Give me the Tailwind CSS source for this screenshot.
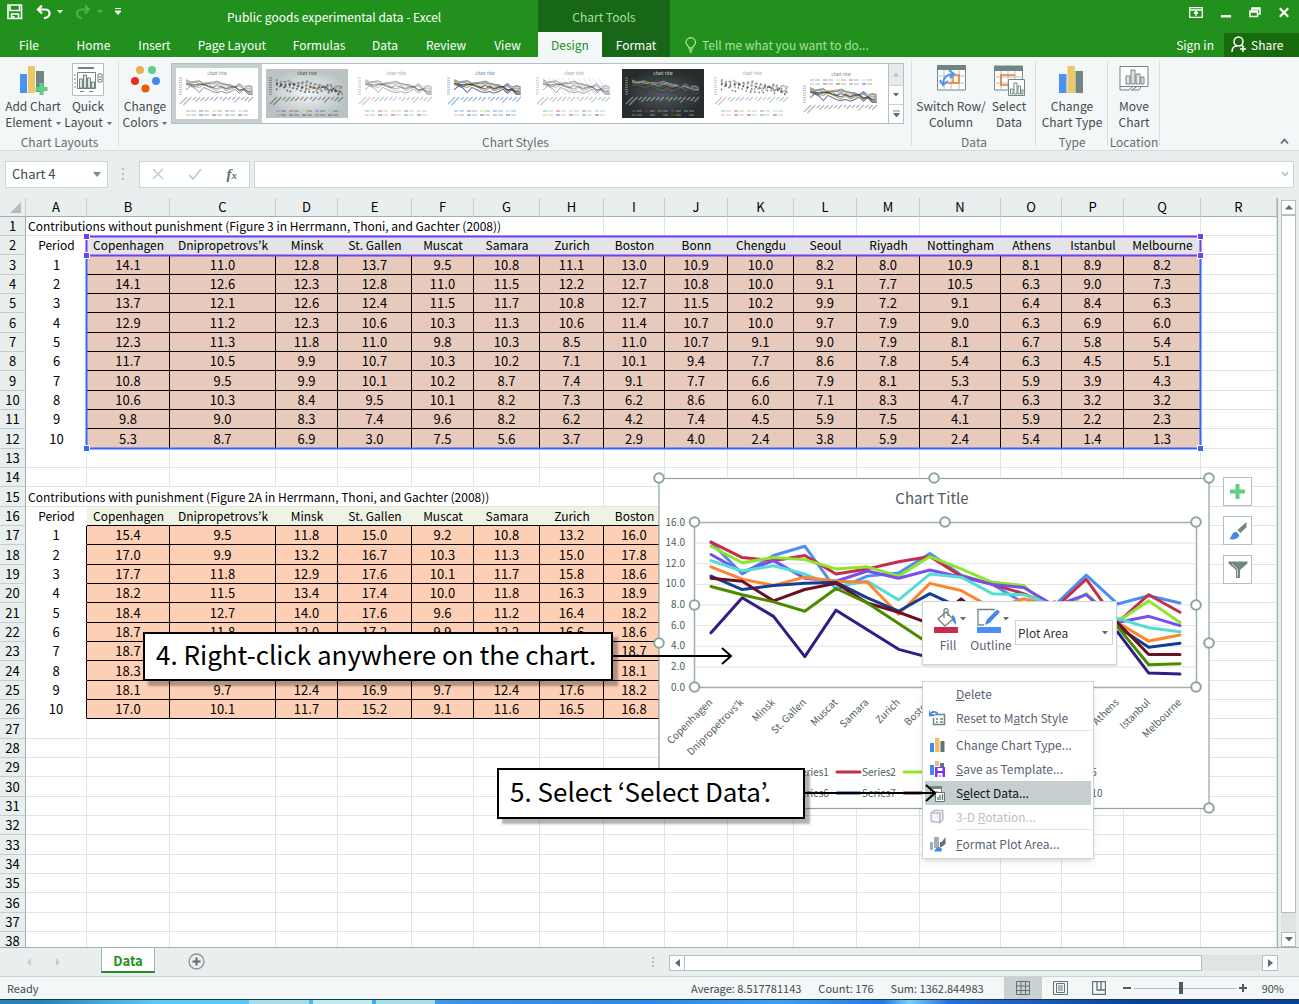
<!DOCTYPE html>
<html lang="en">
<head>
<meta charset="utf-8">
<title>Public goods experimental data - Excel</title>
<script src="https://cdn.jsdelivr.net/npm/@tailwindcss/browser@4"></script>
</head>
<body class="flex h-screen flex-col overflow-hidden bg-[#e9eeee] font-['Noto_Sans_CJK_KR','Open_Sans',sans-serif] text-[12px] leading-4 text-[#3f4b4b]">

<header class="flex h-[57px] shrink-0 bg-[#21901c] text-white">
  <div class="flex w-[538px] shrink-0 flex-col">
    <div class="flex h-8 items-center">
      <div class="flex w-[136px] items-center gap-3 pb-2 pl-[7px]">
        <button aria-label="Save"><svg width="16" height="16" viewBox="0 0 16 16" fill="none" stroke="#fff" stroke-width="1.6"><path d="M1 1h13.5v13.5H1z"/><path d="M3 1v5.5h9.5V1M4.500 14.500V10h7v4.500"/><path d="M6.500 12v2" stroke-width="2"/></svg></button>
        <button aria-label="Undo" class="flex items-center gap-1"><svg width="18" height="16" viewBox="0 0 18 16" fill="none" stroke="#fff" stroke-width="2.200"><path d="M7 1.500 3 5.500l4 4M3 5.500h7c3 0 4.500 1.500 4.500 4S12 14 9 14"/></svg><svg width="6" height="4"><path d="M0 0h6L3 3.500z" fill="#fff"/></svg></button>
        <button aria-label="Redo" class="flex items-center gap-1"><svg width="18" height="16" viewBox="0 0 18 16" fill="none" stroke="#4db04a" stroke-width="2.200"><path d="m10 1.500 4 4-4 4M14 5.500H7C4 5.500 2 7 2 9.500S4 14 7 14"/></svg><svg width="6" height="4"><path d="M0 0h6L3 3.500z" fill="#4db04a"/></svg></button>
        <button aria-label="Customize quick access"><svg width="6" height="8"><path d="M0 .5h6M0 3h6L3 6.500z" fill="#fff" stroke="#fff"/></svg></button>
      </div>
      <h1 class="flex-1 pl-[91px] pt-[2px]">Public goods experimental data - Excel</h1>
    </div>
    <nav class="flex h-[25px] items-center text-center">
      <a href="#" class="w-[58px]">File</a><a href="#" class="ml-1 w-[63px]">Home</a><a href="#" class="w-[59px]">Insert</a><a href="#" class="w-[96px]">Page Layout</a><a href="#" class="w-[78px]">Formulas</a><a href="#" class="w-[54px]">Data</a><a href="#" class="w-[68px]">Review</a><a href="#" class="w-[55px]">View</a>
    </nav>
  </div>
  <div class="flex w-[132px] shrink-0 flex-col bg-[#186617] text-center">
    <div class="h-8 pt-[9px] text-[#a9e0a0]">Chart Tools</div>
    <nav class="flex h-[25px] leading-[25px]"><a href="#" class="w-16 bg-[#f4f7f8] text-[#21901c]">Design</a><a href="#" class="flex-1">Format</a></nav>
  </div>
  <div class="flex flex-1 flex-col">
    <div class="flex h-8 items-center justify-end gap-[18px] pb-2 pr-[10px]">
      <button aria-label="Ribbon display options"><svg width="14" height="11" fill="none" stroke="#fff" stroke-width="1.300"><path d="M.7.7h12.600v9.600H.7zM.7 3h12.600M7 9V5M5 6.500 7 4.500l2 2"/></svg></button>
      <button aria-label="Minimize"><svg width="10" height="11"><path d="M0 8h10v2.500H0z" fill="#fff"/></svg></button>
      <button aria-label="Restore"><svg width="12" height="11" fill="none" stroke="#fff" stroke-width="1.500"><path d="M3 4V1h8v6H9M1 4h7.500v5.500H1zM1 5h7.500M3 2h8"/></svg></button>
      <button aria-label="Close"><svg width="10" height="11"><path d="m.8 1.300 8.400 8.400m0-8.400L.8 9.700" stroke="#fff" stroke-width="2.200"/></svg></button>
    </div>
    <div class="flex h-[25px] items-center">
      <svg width="12" height="16" class="ml-[15px] mr-[5px]" fill="none" stroke="#a9e0a0" stroke-width="1.300"><path d="M4 11c0-2-3-3-3-5.500a4.500 4.500 0 0 1 9.500 0C10.500 8 7.500 9 7.500 11zM4 13h3.500M4.500 15h2.500"/></svg>
      <span class="flex-1 text-[#a9e0a0]">Tell me what you want to do...</span>
      <a href="#" class="mr-[10px]">Sign in</a>
      <button class="flex h-[24px] w-[75px] items-center gap-1 bg-[#186a0c] pl-[7px]"><svg width="16" height="17" fill="none" stroke="#fff" stroke-width="1.500"><circle cx="7.500" cy="5.500" r="4.500"/><path d="M1 16c0-4 2-6 5-6M10 9l3 2M12 10v6M9 13h6"/></svg>Share</button>
    </div>
  </div>
</header>

<section class="flex h-[94px] shrink-0 border-b border-[#d5dcdc] bg-[#f4f7f8] text-center" aria-label="Ribbon">
  <div class="relative w-[119px] shrink-0 pt-[6px]">
    <div class="flex pl-1">
      <button class="flex w-[58px] flex-col items-center"><svg width="32" height="35" viewBox="0 0 32 35"><path d="M3 11h7v19H3z" fill="#4a93f0"/><path d="M11 3h7v27h-7z" fill="#edc866"/><path d="M19 8h8v21h-8z" fill="#718583"/><path d="M24.500 20v12M18.500 26h12" stroke="#5fcf83" stroke-width="4"/></svg><span class="whitespace-nowrap">Add Chart<br>Element<svg class="ml-1 inline" width="5" height="4"><path d="M0 0h5L2.500 3z" fill="#667"/></svg></span></button>
      <button class="flex w-[52px] flex-col items-center"><svg width="32" height="35" viewBox="0 0 32 35" fill="none" stroke="#718583"><path d="M.5.5h31v32H.5z" fill="#fff" stroke="#b4c0bf"/><path d="M6 5h16" stroke-width="2"/><path d="M5.500 9.500h18v16h-18zM2 12h2M2 16h2M2 20h2M2 24h2M8 28.500h4M17 28.500h4"/><path d="M7.500 16h3v9h-3zM11.500 12h3v13h-3zM15.500 15h3v10h-3zM19.500 19h3v6h-3z" fill="#dfe5e5"/><path d="M26 11h4v8h-4zM27 14h2M27 16.500h2"/></svg><span class="whitespace-nowrap">Quick<br>Layout<svg class="ml-1 inline" width="5" height="4"><path d="M0 0h5L2.500 3z" fill="#667"/></svg></span></button>
    </div>
    <div class="pt-1 text-[#5f6f6e]">Chart Layouts</div>
    <div class="absolute right-0 top-1 h-[85px] w-px bg-[#d9dfdf]"></div>
  </div>
  <div class="relative w-[793px] shrink-0 pt-[6px]">
    <div class="flex">
      <button class="flex w-[52px] flex-col items-center"><svg width="32" height="35" viewBox="0 0 32 35"><circle cx="11" cy="7" r="4" fill="#e9b04d"/><circle cx="23" cy="7" r="4" fill="#5fcf83"/><circle cx="6" cy="18" r="4" fill="#e2321b"/><circle cx="27" cy="18" r="4" fill="#4289ea"/><circle cx="16.500" cy="25.500" r="4" fill="#ee5b08"/></svg><span class="whitespace-nowrap">Change<br>Colors<svg class="ml-1 inline" width="5" height="4"><path d="M0 0h5L2.500 3z" fill="#667"/></svg></span></button>
      <div class="flex h-[61px] border border-[#b4c0bf] bg-white">
        <div id="gallery" class="flex w-[716px]"></div>
        <div class="flex w-[15px] flex-col border-l border-[#b4c0bf]">
          <button aria-label="Previous styles" class="flex h-[21px] items-center justify-center bg-[#e6eaea]"><svg width="6" height="4"><path d="M0 3.500h6L3 0z" fill="#b4c0bf"/></svg></button>
          <button aria-label="Next styles" class="flex flex-1 items-center justify-center border-y border-[#c9d2d1]"><svg width="6" height="4"><path d="M0 0h6L3 3.500z" fill="#667"/></svg></button>
          <button aria-label="More styles" class="flex flex-1 items-center justify-center"><svg width="7" height="8"><path d="M0 1h7M.5 3.500h6L3.500 7z" fill="#667" stroke="#667" stroke-width=".8"/></svg></button>
        </div>
      </div>
    </div>
    <div class="pt-1 text-[#5f6f6e]">Chart Styles</div>
    <div class="absolute right-0 top-1 h-[85px] w-px bg-[#d9dfdf]"></div>
  </div>
  <div class="relative w-[124px] shrink-0 pt-[6px]">
    <div class="flex">
      <button class="flex w-[78px] flex-col items-center"><svg width="32" height="35" viewBox="0 0 32 35" fill="none"><path d="M2.500 3h28v24h-28z" fill="#fff" stroke="#718583"/><path d="M2 2h29v5H2z" fill="#718583"/><path d="M2 13h29M2 20h29M9 7v20M16 7v20M24 7v20" stroke="#b4c0bf"/><path d="M18 12h6v8H13M18 20v-8" stroke="#ee7a2b" stroke-width="1.500"/><path d="M8 21c0-6 3-9.500 10-10M5 17l3 5 5-4M14 7l5 4-4 4" stroke="#4a93f0" stroke-width="2"/></svg><span class="whitespace-nowrap">Switch Row/<br>Column</span></button>
      <button class="flex w-[38px] flex-col items-center"><svg width="32" height="35" viewBox="0 0 32 35" fill="none"><path d="M1.500 3h28v24h-28z" fill="#fff" stroke="#718583"/><path d="M1 3h29v5H1z" fill="#718583"/><path d="M1 14h29M1 20h29M8 8v19M15 8v19M22 8v19" stroke="#b4c0bf"/><path d="M22 12H8v10h7" stroke="#ee7a2b" stroke-width="1.500"/><path d="M15.500 16.500h16v16h-16z" fill="#fff" stroke="#718583"/><path d="M17.500 26v5h2.500v-5zM21 20v11h3V20zM25 23v8h2.500v-8zM28 27h2v4h-2z" stroke="#718583"/></svg><span>Select<br>Data</span></button>
    </div>
    <div class="pt-1 text-[#5f6f6e]">Data</div>
    <div class="absolute right-0 top-1 h-[85px] w-px bg-[#d9dfdf]"></div>
  </div>
  <div class="relative w-[72px] shrink-0 pt-[6px]">
    <button class="flex w-full flex-col items-center"><svg width="32" height="35" viewBox="0 0 32 35"><path d="M3 11h7.500v19H3z" fill="#4a93f0"/><path d="M11.500 3h7.500v27h-7.500z" fill="#edc866"/><path d="M19.500 8H27v22h-7.500z" fill="#718583"/></svg><span class="whitespace-nowrap">Change<br>Chart Type</span></button>
    <div class="pt-1 text-[#5f6f6e]">Type</div>
    <div class="absolute right-0 top-1 h-[85px] w-px bg-[#d9dfdf]"></div>
  </div>
  <div class="relative w-[52px] shrink-0 pt-[6px]">
    <button class="flex w-full flex-col items-center"><svg width="32" height="35" viewBox="0 0 32 35" fill="none" stroke="#718583"><path d="M2 3.500h28v20H2z" fill="#fff"/><path d="M8 13h4v8H8zM13 7h4v14h-4zM18 11h4v10h-4zM23 14h3v7h-3z" fill="#dfe5e5"/><path d="M2 23v4h9l4-3.500M14 27l5-3.500M13 27h8l2-3.500"/></svg><span>Move<br>Chart</span></button>
    <div class="pt-1 text-[#5f6f6e]">Location</div>
    <div class="absolute right-0 top-1 h-[85px] w-px bg-[#d9dfdf]"></div>
  </div>
  <div class="flex flex-1 items-end justify-end pb-[5px] pr-[10px]"><button aria-label="Collapse ribbon"><svg width="9" height="7" fill="none" stroke="#667" stroke-width="1.800"><path d="m1 5.500 3.500-4 3.500 4"/></svg></button></div>
</section>

<section class="flex h-[47px] shrink-0 items-center px-[5px] pb-[1px] text-[13px]" aria-label="Formula bar">
  <div class="flex h-[27px] w-[103px] items-center border border-[#ccd5d5] bg-white"><input aria-label="Name box" value="Chart 4" class="w-20 flex-1 pl-[6px] outline-none"><button aria-label="Name list" class="pr-[6px]"><svg width="8" height="5"><path d="M0 0h8L4 5z" fill="#7b8b8a"/></svg></button></div>
  <svg width="31" height="12" fill="#b4c0bf"><path d="M14 0h2v2h-2zM14 5h2v2h-2zM14 10h2v2h-2z"/></svg>
  <div class="flex h-[27px] w-[111px] items-center justify-around border border-[#ccd5d5] bg-white">
    <button aria-label="Cancel"><svg width="12" height="12" stroke="#c4cece" stroke-width="1.600"><path d="m1 1 10 10M11 1 1 11"/></svg></button>
    <button aria-label="Enter"><svg width="14" height="12" fill="none" stroke="#c4cece" stroke-width="2"><path d="m1 7 4 4 8-10"/></svg></button>
    <button aria-label="Insert function" class="font-['Liberation_Serif',serif] text-[15px] font-bold italic text-[#5f6f6e]">f<span class="text-[11px]">x</span></button>
  </div>
  <div class="ml-1 flex h-[27px] flex-1 items-center border border-[#ccd5d5] bg-white pr-1"><input aria-label="Formula" class="h-full flex-1 outline-none"><button aria-label="Expand formula bar"><svg width="8" height="6" fill="none" stroke="#b4c0bf" stroke-width="1.600"><path d="m1 1 3 3.500L7 1"/></svg></button></div>
</section>

<main class="relative flex min-h-0 flex-1 overflow-hidden border-b border-[#9fb1ae]">
  <div class="min-w-0 flex-1 overflow-hidden border-r border-[#9fb1ae] bg-white">
    <table class="w-full table-fixed border-separate border-spacing-0 text-center text-[13px] text-black">
      <colgroup><col class="w-[26px]"><col class="w-[61px]"><col class="w-[83px]"><col class="w-[106px]"><col class="w-[62px]"><col class="w-[74px]"><col class="w-[62px]"><col class="w-[66px]"><col class="w-[64px]"><col class="w-[61px]"><col class="w-[63px]"><col class="w-[66px]"><col class="w-[63px]"><col class="w-[63px]"><col class="w-[81px]"><col class="w-[61px]"><col class="w-[62px]"><col class="w-[77px]"><col></colgroup>
      <thead id="head"></thead>
      <tbody id="body"></tbody>
    </table>
  </div>
  <div class="flex w-[21px] shrink-0 flex-col items-center pt-[2px]">
    <button aria-label="Scroll up" class="flex h-[15px] w-[15px] items-center justify-center border border-[#b4c0bf] bg-white"><svg width="8" height="5"><path d="M0 4.500h8L4 0z" fill="#667"/></svg></button>
    <div class="h-[698px] w-[15px] shrink border border-[#b4c0bf] bg-white"></div>
    <div class="w-[15px] flex-1 bg-[#e0e4e4]"></div>
    <button aria-label="Scroll down" class="flex h-[15px] w-[15px] shrink-0 items-center justify-center border border-[#b4c0bf] bg-white"><svg width="8" height="5"><path d="M0 0h8L4 4.500z" fill="#667"/></svg></button>
  </div>

  <svg class="pointer-events-none absolute left-[82px] top-[34px]" width="1123" height="222" viewBox="82 232 1123 222" fill="none">
    <path d="M86.500 255.500v193h1114v-193" stroke="#3366ff" stroke-width="2"/>
    <path d="M86.500 236.500h1114v19H86.500z" stroke="#6f3ff5" stroke-width="2"/>
    <g stroke="#fff" fill="#6f3ff5"><path d="M83.500 233.500h6v6h-6zM83.500 252.500h6v6h-6zM1197.500 233.500h6v6h-6zM1197.500 252.500h6v6h-6z"/><path d="M83.500 445.500h6v6h-6zM1197.500 445.500h6v6h-6z" fill="#3366ff"/></g>
  </svg>

  <svg id="chart" class="absolute left-[658px] top-[280px] overflow-visible font-['Noto_Sans_CJK_KR',sans-serif]" width="552" height="331" viewBox="658 478 552 331" role="img" aria-label="Line chart"></svg>

  <div class="absolute left-[1223px] top-[279px] flex flex-col gap-[10px]">
    <button aria-label="Chart elements" class="flex h-[29px] w-[29px] items-center justify-center border border-[#b4c0bf] bg-white"><svg width="15" height="15"><path d="M7.500 0v15M0 7.500h15" stroke="#5fcf83" stroke-width="4"/></svg></button>
    <button aria-label="Chart styles" class="flex h-[29px] w-[29px] items-center justify-center border border-[#b4c0bf] bg-white"><svg width="20" height="18"><path d="M18.500 0v5l-6 6-3-3z" fill="#718583"/><path d="M1 17c3-1 2-6 6-7 2-.500 5 2 4 4-1 3-6 4-10 3z" fill="#4289ea"/><path d="M9 9.500 11 12" stroke="#fff"/></svg></button>
    <button aria-label="Chart filters" class="flex h-[29px] w-[29px] items-center justify-center border border-[#b4c0bf] bg-white"><svg width="20" height="18"><path d="M.5.5h19v2L12 9v8H8V9L.5 2.500z" fill="#718583"/><path d="m4 3 5.500 5v8" stroke="#c9d2d1" fill="none"/></svg></button>
  </div>

  <div class="absolute left-[922px] top-[403px] flex h-[64px] w-[195px] border border-[#ccd5d5] bg-white pl-[12px] pt-[6px] text-[#5b5f72] shadow-sm" role="toolbar" aria-label="Mini toolbar">
    <button class="flex w-[30px] flex-col items-center"><svg width="32" height="27" viewBox="0 0 32 27" fill="none"><path d="m4 11 8-7 7 7-8 7z" fill="#fff" stroke="#718583" stroke-width="1.300"/><path d="M10 10V2q2-3 4 0v6" stroke="#718583" stroke-width="1.300"/><path d="M18 7q4 1 4 10-2-2-4-5z" fill="#4289ea"/><path d="M0 19h24v6H0z" fill="#c62d4d"/><path d="M26 9h6l-3 3.500z" fill="#667"/></svg><span class="pr-1 pt-[2px]">Fill</span></button>
    <button class="ml-[6px] flex w-[44px] flex-col items-center"><svg width="32" height="27" viewBox="0 0 32 27" fill="none"><path d="M18 1.500H1V17h6" stroke="#718583" stroke-width="1.300"/><path d="m8 17 1.500-5L20 1.500l3 2.500L12.500 15z" fill="#4289ea"/><path d="M0 19h24v6H0z" fill="#4a8ff7"/><path d="M26 9h6l-3 3.500z" fill="#667"/></svg><span class="pr-1 pt-[2px]">Outline</span></button>
    <div class="relative mt-[12px] h-[25px] w-[98px]"><select aria-label="Chart element" class="h-full w-full appearance-none border border-[#ccd5d5] bg-white pl-[2px] text-[#333]"><option>Plot Area</option></select><svg class="pointer-events-none absolute right-[5px] top-[11px]" width="6" height="4"><path d="M0 0h6L3 3.500z" fill="#667"/></svg></div>
  </div>

  <div class="absolute left-[922px] top-[483px] w-[172px] border border-[#ccd5d5] bg-white px-[2px] pb-[2px] text-[#5b5f72] shadow-md" role="menu" aria-label="Context menu">
    <button role="menuitem" class="flex h-6 w-full items-center pl-[31px]"><span><u>D</u>elete</span></button>
    <button role="menuitem" class="flex h-6 w-full items-center gap-[10px] pl-1"><svg width="17" height="16" fill="none"><path d="M6 4.500h9.500v10h-11V8" stroke="#718583" stroke-width="1.500"/><path d="M7 9h2M11 9h3M7 12h2M11 12h3" stroke="#718583" stroke-width="1.500"/><path d="M1 5c2-4 6-4 8-1M0 1l1 4.500 4.500-.500" stroke="#4289ea" stroke-width="1.800"/></svg><span>Reset to M<u>a</u>tch Style</span></button>
    <div class="ml-[31px] h-[3px] border-t border-[#dfe5e5]" role="separator"></div>
    <button role="menuitem" class="flex h-6 w-full items-center gap-[10px] pl-1"><svg width="17" height="16"><path d="M1 6h4v9H1z" fill="#4289ea"/><path d="M6 1h4.500v14H6z" fill="#e9c06a"/><path d="M11.500 4h4v11h-4z" fill="#627472"/></svg><span>Change Chart T<u>y</u>pe...</span></button>
    <button role="menuitem" class="flex h-6 w-full items-center gap-[10px] pl-1"><svg width="17" height="16"><path d="M1 4h4v10H1z" fill="#4289ea"/><path d="M6 0h4v5H6z" fill="#e9c06a"/><path d="M11 2h4v4h-4z" fill="#627472"/><path d="M6 6h10v10H6z" fill="#7a33f0"/><path d="M8.500 7h5v3h-5zM8.500 12h5v4h-2v-2h-1v2h-2z" fill="#fff"/></svg><span><u>S</u>ave as Template...</span></button>
    <button role="menuitem" class="flex h-6 w-full items-center gap-[10px] bg-[#c6cfcf] pl-1 text-[#111]"><svg width="17" height="17" fill="none"><path d="M1.500 2h11v9h-11z" fill="#fff" stroke="#718583"/><path d="M1 1h12v3H1z" fill="#718583"/><path d="M3 7h6" stroke="#ee7a2b" stroke-width="1.500"/><path d="M6.500 7.500h9v9h-9z" fill="#fff" stroke="#627472"/><path d="M9 15v-3M11 15v-5M13.500 15V9" stroke="#627472" stroke-width="1.300"/></svg><span>S<u>e</u>lect Data...</span></button>
    <button role="menuitem" disabled class="flex h-6 w-full items-center gap-[10px] pl-1 text-[#bcc0c8]"><svg width="17" height="16" fill="#f6f3f8" stroke="#b9bcc6" stroke-width="1.500"><path d="m2 4 3-2.500h8.500L11 4v9.500L3 12.500 2 11z"/><path d="M13.500 1.500 14 10l-3 3.500V4H2"/></svg><span>3-D <u>R</u>otation...</span></button>
    <div class="ml-[31px] h-[3px] border-t border-[#dfe5e5]" role="separator"></div>
    <button role="menuitem" class="flex h-6 w-full items-center gap-[10px] pl-1"><svg width="17" height="16"><path d="M1 6h3v8H1zM5 1h5v11H5z" fill="#a3afae"/><path d="M11 6h2v5h-2zM16.500 1v7l-4 3-2-2z" fill="#627472"/><path d="M5 15.500c1-1 2-5 5-4.500s4 3 2 4.500z" fill="#4289ea"/></svg><span><u>F</u>ormat Plot Area...</span></button>
  </div>

  <p class="absolute left-[143px] top-[434px] flex h-[49px] w-[470px] items-center border-2 border-black bg-white pb-[5px] pl-[11px] text-[26px] text-black shadow-[5px_5px_2px_rgba(0,0,0,0.3)]">4. Right-click anywhere on the chart.</p>
  <p class="absolute left-[497px] top-[570px] flex h-[51px] w-[308px] items-center border-2 border-black bg-white pb-[5px] pl-[11px] text-[26px] text-black shadow-[5px_5px_2px_rgba(0,0,0,0.3)]">5. Select ‘Select Data’.</p>
  <svg class="pointer-events-none absolute left-[612px] top-[449px]" width="122" height="18" fill="none" stroke="#000" stroke-width="2"><path d="M0 9h119M110 1l9 8-9 8"/></svg>
  <svg class="pointer-events-none absolute left-[804px] top-[586px]" width="134" height="18" fill="none" stroke="#000" stroke-width="2"><path d="M0 9h131M122 1l9 8-9 8"/></svg>
</main>

<section class="flex h-[29px] shrink-0 items-start border-b border-[#ccd5d5]" aria-label="Sheet tabs">
  <div class="flex h-7 w-[101px] items-center gap-[23px] pl-[26px]"><svg width="6" height="8"><path d="M5 0v8L1 4z" fill="#c4cece"/></svg><svg width="6" height="8"><path d="M1 0v8l4-4z" fill="#c4cece"/></svg></div>
  <button class="h-[25px] w-[54px] border-x border-b-2 border-x-[#9fb1ae] border-b-[#21901c] bg-white pt-[2px] text-[13px] font-bold text-[#21901c]">Data</button>
  <button aria-label="New sheet" class="ml-[33px] mt-[5px]"><svg width="17" height="17" fill="none" stroke="#8a9a99"><circle cx="8.500" cy="8.500" r="7.500" stroke-width="1.300"/><path d="M8.500 4.500v8M4.500 8.500h8" stroke="#667" stroke-width="2"/></svg></button>
  <svg class="ml-auto mr-[14px] mt-2" width="4" height="14" fill="#b4c0bf"><path d="M1 1h2v2H1zM1 5h2v2H1zM1 9h2v2H1z"/></svg>
  <div class="mr-[21px] mt-[7px] flex h-[16px] w-[609px] bg-[#e0e4e4]">
    <button aria-label="Scroll left" class="flex w-[16px] items-center justify-center border border-[#b4c0bf] bg-white"><svg width="5" height="8"><path d="M5 0v8L0 4z" fill="#667"/></svg></button>
    <div class="w-[517px] border border-l-0 border-[#b4c0bf] bg-white"></div>
    <button aria-label="Scroll right" class="ml-auto flex w-[16px] items-center justify-center border border-[#b4c0bf] bg-white"><svg width="5" height="8"><path d="M0 0v8l5-4z" fill="#667"/></svg></button>
  </div>
</section>

<footer class="flex h-[22px] shrink-0 items-center bg-[#f4f7f8] pl-[7px] pr-[15px] text-[11px]">
  <span class="flex-1">Ready</span>
  <span class="mr-[17px]">Average: 8.517781143</span><span class="mr-[17px]">Count: 176</span><span class="mr-[20px]">Sum: 1362.844983</span>
  <button aria-label="Normal view" class="flex h-full w-[38px] items-center justify-center bg-[#c9d2d1]"><svg width="14" height="14" fill="none" stroke="#627472"><path d="M.5.5h13v13H.5zM5 0v14M9.500 0v14M0 5h14M0 9.500h14"/></svg></button>
  <button aria-label="Page layout view" class="flex h-full w-[38px] items-center justify-center"><svg width="15" height="14" fill="none" stroke="#627472"><path d="M.5.5h14v13H.5zM3.500 2.500h8v9h-8zM5 5h5M5 7h5M5 9h5"/></svg></button>
  <button aria-label="Page break view" class="flex h-full w-[38px] items-center justify-center"><svg width="14" height="14" fill="none" stroke="#627472" stroke-width="1.300"><path d="M.5.5h13v13H.5zM5 .5V9h8.500M9 .5V9"/></svg></button>
  <button aria-label="Zoom out" class="ml-[5px]"><svg width="8" height="8"><path d="M0 4h8" stroke="#4d5d5c" stroke-width="2"/></svg></button>
  <input type="range" aria-label="Zoom" min="0" max="100" value="46" class="mx-[3px] h-3 w-[102px] appearance-none bg-[linear-gradient(#b4c0bf,#b4c0bf)] bg-[length:100%_1px] bg-center bg-no-repeat [&::-webkit-slider-thumb]:h-3 [&::-webkit-slider-thumb]:w-1 [&::-webkit-slider-thumb]:appearance-none [&::-webkit-slider-thumb]:bg-[#4d5d5c]">
  <button aria-label="Zoom in"><svg width="8" height="8"><path d="M0 4h8M4 0v8" stroke="#4d5d5c" stroke-width="2"/></svg></button>
  <span class="ml-[15px]">90%</span>
</footer>
<div class="flex h-[5px] shrink-0 border-t border-[#0e3a50] bg-[linear-gradient(90deg,#2b7fb8,#2b7fb8_3%,#5cc8f5_12%,#5cc8f5_18%,#3b8ff0_36%,#2f86ee_50%,#3f9cf8_60%,#2a78e8_68%,#7ad0fa_70%,#2a6fe0_73%,#0c3d9c_88%)]">
  <div class="ml-[249px] w-[60px] bg-[#a6dcec]"></div><div class="ml-1 w-[59px] bg-[#c2e8f2]"></div><div class="ml-1 w-[59px] bg-[#a6dcec]"></div>
</div>

<script>
const cities = ['Copenhagen','Dnipropetrovs’k','Minsk','St. Gallen','Muscat','Samara','Zurich','Boston','Bonn','Chengdu','Seoul','Riyadh','Nottingham','Athens','Istanbul','Melbourne'];
const without = `14.1 11.0 12.8 13.7 9.5 10.8 11.1 13.0 10.9 10.0 8.2 8.0 10.9 8.1 8.9 8.2
14.1 12.6 12.3 12.8 11.0 11.5 12.2 12.7 10.8 10.0 9.1 7.7 10.5 6.3 9.0 7.3
13.7 12.1 12.6 12.4 11.5 11.7 10.8 12.7 11.5 10.2 9.9 7.2 9.1 6.4 8.4 6.3
12.9 11.2 12.3 10.6 10.3 11.3 10.6 11.4 10.7 10.0 9.7 7.9 9.0 6.3 6.9 6.0
12.3 11.3 11.8 11.0 9.8 10.3 8.5 11.0 10.7 9.1 9.0 7.9 8.1 6.7 5.8 5.4
11.7 10.5 9.9 10.7 10.3 10.2 7.1 10.1 9.4 7.7 8.6 7.8 5.4 6.3 4.5 5.1
10.8 9.5 9.9 10.1 10.2 8.7 7.4 9.1 7.7 6.6 7.9 8.1 5.3 5.9 3.9 4.3
10.6 10.3 8.4 9.5 10.1 8.2 7.3 6.2 8.6 6.0 7.1 8.3 4.7 6.3 3.2 3.2
9.8 9.0 8.3 7.4 9.6 8.2 6.2 4.2 7.4 4.5 5.9 7.5 4.1 5.9 2.2 2.3
5.3 8.7 6.9 3.0 7.5 5.6 3.7 2.9 4.0 2.4 3.8 5.9 2.4 5.4 1.4 1.3`.split('\n').map(r => r.split(' '));
const withPun = `15.4 9.5 11.8 15.0 9.2 10.8 13.2 16.0
17.0 9.9 13.2 16.7 10.3 11.3 15.0 17.8
17.7 11.8 12.9 17.6 10.1 11.7 15.8 18.6
18.2 11.5 13.4 17.4 10.0 11.8 16.3 18.9
18.4 12.7 14.0 17.6 9.6 11.2 16.4 18.2
18.7 11.8 12.0 17.2 9.9 12.2 16.6 18.6
18.7 - - - - - - 18.7
18.3 - - - - - - 18.1
18.1 9.7 12.4 16.9 9.7 12.4 17.6 18.2
17.0 10.1 11.7 15.2 9.1 11.6 16.5 16.8`.split('\n').map(r => r.split(' '));

// Worksheet
const th = 'h-[19px] border-b border-r border-b-[#9fb1ae] border-r-[#c4cece] bg-[#e9eeee] p-0 font-normal leading-[18px]';
document.getElementById('head').innerHTML = '<tr><th class="' + th + '"><svg class="ml-auto mr-1" width="11" height="11"><path d="M11 0v11H0z" fill="#b4c0bf"/></svg></th>' +
  [...'ABCDEFGHIJKLMNOPQR'].map(c => `<th scope="col" class="${th}">${c}</th>`).join('') + '</tr>';
const kinds = {
  grid: 'border-b border-r border-[#dfe5e5] p-0',
  blank: 'border-b border-white bg-white p-0',
  period: 'border-b border-white bg-white p-0 text-[12px]',
  edge: 'border-b border-r border-b-white border-r-black bg-white p-0',
  title: 'border-b border-[#dfe5e5] p-0 pl-[2px] text-left text-[12px] whitespace-nowrap',
  city1: 'border-b border-[#e4e3e8] bg-[#e4e3e8] p-0 text-[12px] whitespace-nowrap',
  city2: 'border-b border-black bg-[#eff3e3] p-0 text-[12px] whitespace-nowrap',
  data1: 'border-b border-r border-black bg-[#e8cabd] p-0',
  data2: 'border-b border-r border-black bg-[#fdcfb5] p-0'
};
const td = (k, t = '', span = 1) => `<td colspan="${span}" class="${kinds[k]}">${t === '-' ? '' : t}</td>`;
let html = '';
for (let r = 1; r <= 38; r++) {
  let cells;
  if (r === 1) cells = td('title', 'Contributions without punishment (Figure 3 in Herrmann, Thoni, and Gachter (2008))', 7) + td('grid').repeat(11);
  else if (r === 15) cells = td('title', 'Contributions with punishment (Figure 2A in Herrmann, Thoni, and Gachter (2008))', 7) + td('grid').repeat(11);
  else if (r === 2) cells = td('period', 'Period') + cities.map(c => td('city1', c)).join('') + td('grid');
  else if (r === 16) cells = td('period', 'Period') + cities.map(c => td('city2', c)).join('') + td('grid');
  else if (r > 2 && r < 13) cells = td('blank', r - 2) + without[r - 3].map(v => td('data1', v)).join('') + td('grid');
  else if (r > 16 && r < 27) cells = td('edge', r - 16) + withPun[r - 17].map(v => td('data2', v)).join('') + td('grid').repeat(9);
  else cells = td('grid').repeat(18);
  html += `<tr class="${r % 3 ? 'h-[19px]' : 'h-[20px]'} leading-[18px]"><th scope="row" class="border-b border-r border-b-[#c4cece] border-r-[#9fb1ae] bg-[#e9eeee] p-0 font-normal">${r}</th>${cells}</tr>`;
}
document.getElementById('body').innerHTML = html;

// Chart
const colors = ['#4a8ff7','#c62d4d','#8ee52a','#7a4df0','#55dcd3','#ff8430','#123f94','#6b1024','#4c8a00','#2f1e84'];
const X = i => 711 + i * 469 / 15, Y = v => 687.5 - v * 10.3125;
const line = (s, x, y) => s.map((v, i) => x(i) + ',' + y(v)).join(' ');
let g = '<rect x="659" y="478.500" width="550" height="330" fill="#fff" stroke="#8fa3a1" stroke-width="1.200"/>';
for (let v = 0; v <= 16; v += 2) {
  g += `<path d="M695 ${Y(v)}H1196" stroke="#dfe5e5"/><text x="685" y="${Y(v) + 3}" text-anchor="end" font-size="10" fill="#4d5d5c">${v}.0</text>`;
}
g += '<rect x="694.500" y="522.500" width="502" height="165" fill="none" stroke="#9fb1ae" stroke-width="1.500"/>';
g += '<text x="932" y="503.500" text-anchor="middle" font-size="15" fill="#4d5d5c">Chart Title</text>';
without.forEach((s, k) => {
  g += `<polyline points="${line(s, X, Y)}" fill="none" stroke="${colors[k]}" stroke-width="3" stroke-linejoin="round" stroke-linecap="round"/>`;
  const lx = 769 + (k % 5) * 67, ly = k < 5 ? 772 : 793;
  g += `<path d="M${lx + 1} ${ly}h23" stroke="${colors[k]}" stroke-width="3" stroke-linecap="round"/><text x="${lx + 26}" y="${ly + 4}" font-size="10" fill="#4d5d5c">Series${k + 1}</text>`;
});
cities.forEach((c, i) => { g += `<text transform="translate(${X(i) + 2} 703) rotate(-45)" text-anchor="end" font-size="10" fill="#4d5d5c">${c}</text>`; });
[[659,478],[934,478],[1209,478],[659,643],[1209,643],[1209,808],[694.5,522],[945,522],[1196,522],[694.5,605],[1196,605],[694.5,687],[1196,687]]
  .forEach(p => { g += `<circle cx="${p[0]}" cy="${p[1]}" r="4.800" fill="#fff" stroke="#8fa3a1" stroke-width="2"/>`; });
document.getElementById('chart').innerHTML = g;

// Style gallery
const looks = [
  { bg: '#fff', ink: '#667', w: .8 }, { bg: 'url(#grey)', ink: '#333', w: 1.6, dash: '2 2.4' }, { bg: '#fff', ink: '#8a9796', w: .6 }, { bg: '#fff', ink: '#2a6fc0', w: 1.1 },
  { bg: '#fff', ink: '#8a9796', w: .6, hatch: true }, { bg: 'url(#dark)', ink: '#dfe5e5', w: 1 }, { bg: '#fff', ink: '#8a9796', w: 1.6, dash: '1.5 3' }, { bg: '#fff', ink: '#667', w: 1.1, top: true }];
document.getElementById('gallery').innerHTML = looks.map((l, n) => {
  const dy = l.top ? 8 : 0;
  let s = '';
  if (n === 1) s += '<radialGradient id="grey"><stop stop-color="#f2f5f5"/><stop offset="1" stop-color="#b9c3c3"/></radialGradient>';
  if (n === 5) s += '<radialGradient id="dark"><stop stop-color="#525a5b"/><stop offset="1" stop-color="#272c2d"/></radialGradient>';
  s += `<rect width="82" height="49" fill="${l.bg}"/><text x="41" y="${l.top ? 7 : 6}" text-anchor="middle" font-size="4" fill="${l.ink}">Chart Title</text>`;
  if (l.hatch) for (let i = 0; i < 12; i++) s += `<path d="M${10 + i * 5} 9l12 17" stroke="#dfe5e5"/>`;
  for (let i = 0; i < 8; i++) s += `<path d="M3 ${9 + dy + i * 2.3}h3" stroke="${l.ink}" stroke-width=".8" opacity=".6"/>`;
  without.forEach((d, k) => {
    s += `<polyline points="${line(d, i => 10 + i * 4.45, v => 27 + dy - v * 1.15)}" fill="none" stroke="${colors[k]}" stroke-width="${l.w}" ${l.dash ? `stroke-dasharray="${l.dash}"` : ''} opacity=".65"/>`;
    const x = 10 + (k % 5) * 13, y = (l.top ? 11 : 42) + (k > 4 ? 4 : 0);
    s += `<path d="M${x} ${y}h4" stroke="${colors[k]}" stroke-width=".7"/><path d="M${x + 5} ${y}h5" stroke="${l.ink}" opacity=".5"/>`;
  });
  for (let i = 0; i < 16; i++) { const e = [9, 10, 4, 6, 5, 5, 4, 5, 3, 5, 4, 4, 7, 4, 5, 6][i] * .8; s += `<path d="M${11 + i * 4.4} ${28 + dy}l${-e} ${e}" stroke="${l.ink}" stroke-width="1.100" opacity=".5"/>`; }
  return `<button aria-label="Style ${n + 1}" class="${n === 0 ? 'h-[59px] w-[90px] shrink-0 border-4 border-[#c6cfcf]' : 'h-[59px] w-[89px] shrink-0 border-4 border-transparent'}"><svg width="82" height="49" viewBox="0 0 82 49">${s}</svg></button>`;
}).join('');
</script>
</body>
</html>
